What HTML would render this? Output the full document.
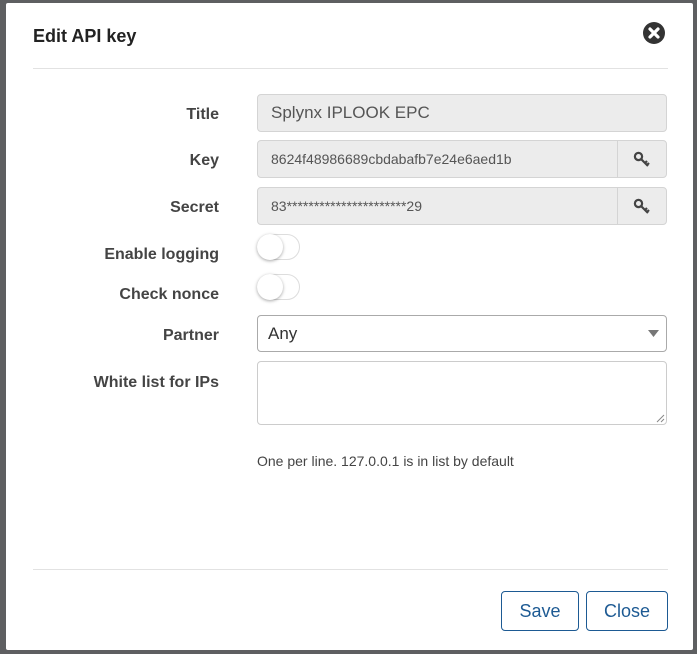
<!DOCTYPE html>
<html><head><meta charset="utf-8"><style>
*{box-sizing:border-box;margin:0;padding:0}
html,body{width:697px;height:654px;overflow:hidden;background:#5e5f61;font-family:"Liberation Sans",Arial,sans-serif}
.modal{position:absolute;left:6px;top:3px;width:687px;height:647px;background:#fff;border-radius:2px;overflow:hidden}
.title{position:absolute;left:27px;top:23px;font-size:18px;font-weight:bold;color:#222}
.x{position:absolute;left:637px;top:19px;width:22px;height:22px;border-radius:50%;background:#333}
.hr{position:absolute;left:27px;width:635px;height:1px;background:#e2e2e2}
.lbl{position:absolute;right:474px;font-size:16px;font-weight:bold;color:#444;text-align:right;white-space:nowrap}
.inp{position:absolute;left:251px;width:410px;background:#ececec;border:1px solid #d4d4d4;border-radius:4px;color:#555}
.btn{position:absolute;left:359px;width:49px;height:36px;border-left:1px solid #d4d4d4}
.tg{position:absolute;left:251px;width:43px;height:26px;border:1px solid #ddd;border-radius:13px;background:#fff}
.tg:before{content:"";position:absolute;left:-1px;top:-1px;width:26px;height:26px;border-radius:50%;background:#fff;box-shadow:0 1px 3px rgba(0,0,0,.35)}
.b{position:absolute;top:588px;height:40px;border:1px solid #1d5a93;border-radius:4px;color:#1d5a93;font-size:18px;text-align:center;line-height:38px;background:#fff}
</style></head><body>
<div class="modal">
<div class="title">Edit API key</div>
<div class="x"><svg width="22" height="22" viewBox="0 0 22 22"><path d="M7 7L15 15M15 7L7 15" stroke="#fff" stroke-width="3.2" stroke-linecap="round"/></svg></div>
<div class="hr" style="top:65px"></div>

<div class="lbl" style="top:103px">Title</div>
<div class="inp" style="top:91px;height:38px;font-size:17px;line-height:36px;padding-left:13px">Splynx IPLOOK EPC</div>

<div class="lbl" style="top:149px">Key</div>
<div class="inp" style="top:137px;height:38px;font-size:14px;line-height:36px;padding-left:13px">8624f48986689cbdabafb7e24e6aed1b
<div class="btn" style="top:0"><svg style="position:absolute;left:15px;top:10px" width="18" height="18" viewBox="0 0 18 18"><circle cx="5.5" cy="5.5" r="3.6" fill="none" stroke="#444" stroke-width="2.2"/><path d="M8 8L15 15M12 12L14 10M14 14L16 12" stroke="#444" stroke-width="2.2"/></svg></div></div>

<div class="lbl" style="top:196px">Secret</div>
<div class="inp" style="top:184px;height:38px;font-size:14px;line-height:36px;padding-left:13px">83**********************29
<div class="btn" style="top:0"><svg style="position:absolute;left:15px;top:10px" width="18" height="18" viewBox="0 0 18 18"><circle cx="5.5" cy="5.5" r="3.6" fill="none" stroke="#444" stroke-width="2.2"/><path d="M8 8L15 15M12 12L14 10M14 14L16 12" stroke="#444" stroke-width="2.2"/></svg></div></div>

<div class="lbl" style="top:243px">Enable logging</div>
<div class="tg" style="top:231px"></div>
<div class="lbl" style="top:283px">Check nonce</div>
<div class="tg" style="top:271px"></div>

<div class="lbl" style="top:324px">Partner</div>
<div class="inp" style="top:312px;height:37px;background:#fff;border-color:#aaa;font-size:17px;line-height:35px;padding-left:10px;color:#333">Any
<svg style="position:absolute;right:6px;top:14px" width="12" height="8"><path d="M0 0H11L5.5 7Z" fill="#777"/></svg></div>

<div class="lbl" style="top:371px">White list for IPs</div>
<div class="inp" style="top:358px;height:64px;background:#fff;border-color:#ccc">
<svg style="position:absolute;right:1px;bottom:1px" width="10" height="10"><path d="M9 2L2 9M9 6L6 9" stroke="#888"/></svg></div>

<div style="position:absolute;left:251px;top:450px;font-size:14px;color:#444">One per line. 127.0.0.1 is in list by default</div>

<div class="hr" style="top:566px"></div>
<div class="b" style="left:495px;width:78px">Save</div>
<div class="b" style="left:580px;width:82px">Close</div>
</div>
</body></html>
